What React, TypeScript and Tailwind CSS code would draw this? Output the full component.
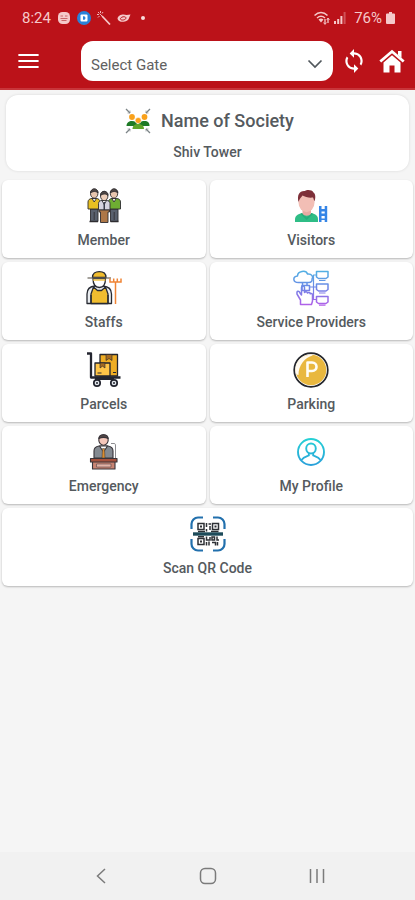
import { useState } from 'react';
import type { ReactNode } from 'react';
import { MdSync } from 'react-icons/md';

const gates = ['Select Gate', 'Main Gate', 'East Gate', 'West Gate'];

function SocietyIcon() {
  return (
    <svg viewBox="0 0 26 26" className="h-[26px] w-[26px]" aria-hidden="true">
      <g stroke="#7c8487" strokeWidth="1.3" fill="none">
        <path d="M1 1l4 4M25 1l-4 4M1 25l4-4M25 25l-4-4" />
        <path d="M2.5 5H5V2.5M23.5 5H21V2.5M2.5 21H5v2.5M23.5 21H21v2.5" strokeWidth="0.6" />
      </g>
      <circle cx="7" cy="9" r="2.9" fill="#f9a11b" />
      <circle cx="19.5" cy="9" r="2.9" fill="#f9a11b" />
      <path d="M1.5 18c0-3.5 2.5-5 5.5-5s5 1.5 6 5z" fill="#1d7a26" />
      <path d="M13 18c0-3.5 3-5 6.5-5s5 1.5 5 5z" fill="#1d7a26" />
      <path d="M7.5 21c0-3.5 2.5-5 5.7-5s5.8 1.5 5.8 5z" fill="#5fa52a" />
      <circle cx="13.2" cy="12.5" r="3" fill="#f9a11b" stroke="#fff" strokeWidth="0.5" />
    </svg>
  );
}

function MemberIcon() {
  return (
    <svg viewBox="0 0 36 36" className="h-9 w-9" aria-hidden="true">
      <g stroke="#2e2c30" strokeWidth="0.9" strokeLinejoin="round">
        <path d="M4.5 21H12v12.5H4.5zM24.5 21H32v12.5h-7.5z" fill="#59606d" />
        <path d="M2 21v-7c0-2 1.5-3.5 4-3.5h4.5c2 0 3.5 1.5 3.5 3.5v7z" fill="#e7bf22" />
        <path d="M22.5 21v-7c0-2 1.5-3.5 3.5-3.5h4.5c2.5 0 4 1.5 4 3.5v7z" fill="#6eae32" />
        <path d="M6 10.5l2.2 3.5 2.3-3.5zM25.8 10.5L28 14l2.3-3.5z" fill="#f2eee8" />
        <ellipse cx="8.2" cy="5.5" rx="3.7" ry="4.7" fill="#e8c6ae" />
        <ellipse cx="28" cy="5.5" rx="3.7" ry="4.7" fill="#e8c6ae" />
        <path d="M4.5 5C4 .2 12.5-.5 12 5c-2-2-5-2-7.5 0zM24.3 5c-.5-4.8 8-5.5 7.5 0-2-2-5-2-7.5 0z" fill="#514947" />
        <path d="M12.5 22v-6.5c0-2 1.5-3 3.5-3h4.5c2 0 3.5 1 3.5 3V22z" fill="#d5d4df" />
        <path d="M16 12.5l2.2 4 2.3-4z" fill="#fff" />
        <path d="M17.5 14H19v8h-1.5z" fill="#3b3e4a" stroke="none" />
        <ellipse cx="18.2" cy="8" rx="3.7" ry="4.7" fill="#edceb9" />
        <path d="M14.5 7.5c-.5-5.5 8-5.5 7.5 0-2-2-5-2-7.5 0z" fill="#514947" />
        <path d="M13 22h10.5v2H22v10.5h-7.5V24H13z" fill="#ad7747" />
      </g>
      <path d="M8.2 24v8M28.2 24v8" stroke="#2e2c30" strokeWidth="0.8" />
      <path d="M3.5 33.5H12M24.5 33.5h8" stroke="#2e2c30" strokeWidth="1.5" />
    </svg>
  );
}

function VisitorsIcon() {
  return (
    <svg viewBox="0 0 36 36" className="h-9 w-9" aria-hidden="true">
      <path d="M2 34v-2.5c0-4 3-5.5 7-6.5h9.500c4 1 6.500 2.500 6.500 6.500V34z" fill="#2fbd86" />
      <path d="M9 25l4.700 4.500L18.500 25l1.500 1-6.300 6L7.500 26z" fill="#27ad7c" />
      <path d="M9.500 20H18v5.500c-1.500 3-7 3-8.500 0z" fill="#e8aaa3" />
      <ellipse cx="13.5" cy="14.5" rx="8" ry="9.7" fill="#f2beb5" />
      <path d="M5.500 14C3.800 7 6.500 2.500 12 3c2-1.500 7-1.300 8.500 1.500 2.500 2 2 6 1 9L20 9.500c-4 .5-8-.5-10.500-2-1 1.500-3 3-4 6.500z" fill="#7e3039" />
      <g fill="#3585e6">
        <path d="M26 18h2.500v16H26zM31.700 18h2.500v16h-2.500z" />
        <path d="M26 21h8v2.500h-8zM26 25.500h8V28h-8zM26 30.500h8V32h-8z" />
      </g>
    </svg>
  );
}

function StaffsIcon() {
  return (
    <svg viewBox="0 0 36 36" className="h-9 w-9" aria-hidden="true">
      <g stroke="#272a32" strokeWidth="1.3" strokeLinejoin="round">
        <path d="M1 33.5V24c0-5 3-7.5 8-8h8c5 .5 8.500 3 8.500 8v9.500z" fill="#e9ecef" />
        <path d="M5 33.500V24l2.500-7 4 3.500h4l4-3.500 2.500 7v9.500z" fill="#f1bd2f" />
        <path d="M7 8.500c0 6 2.500 9 6.300 9s6.200-3 6.200-9z" fill="#fff" />
        <path d="M6.500 7.500c0-4 2.800-5.800 6.800-5.800s6.700 1.800 6.700 5.800z" fill="#f1bd2f" />
        <path d="M5 25v8.500M22 25v8.500" fill="none" />
      </g>
      <path d="M1.500 8H25" stroke="#69645a" strokeWidth="1.2" />
      <path d="M7 10h12.500" stroke="#f1bd2f" strokeWidth="1.3" />
      <path d="M24 8.500V12h11V8.500M27.700 8.500V12M31.300 8.500V12M29.500 12v22" fill="none" stroke="#f08435" strokeWidth="1.5" />
    </svg>
  );
}

function ServiceIcon() {
  return (
    <svg viewBox="0 0 36 36" className="h-9 w-9" aria-hidden="true">
      <defs>
        <linearGradient id="serviceStroke" x1="0" y1="0" x2="0" y2="36" gradientUnits="userSpaceOnUse">
          <stop offset="0" stopColor="#4fb2e3" />
          <stop offset="0.5" stopColor="#6e86e6" />
          <stop offset="1" stopColor="#b45ee9" />
        </linearGradient>
      </defs>
      <g fill="none" stroke="url(#serviceStroke)" strokeWidth="1.5" strokeLinejoin="round">
        <path d="M5.500 12.500C-.5 12.500-.5 6.500 4.500 6c0-5 8.500-6.500 10-2 4.500-.5 6 3 4.500 5 .5 2-1 3.500-3 3.500z" />
        <path d="M23.500 1.500H35V7l-2 1.500h-7.500l-2-1.500zM23.500 14H35v5.500L33 21h-7.500l-2-1.500zM23.500 26.500H35V32l-2 1.500h-7.500l-2-1.500z" />
        <path d="M26 10.500h6.500M26 23h6.500M26 35.200h6.500M23.500 5h-3v24.500h3M16 17h7.500" strokeWidth="1.2" />
        <path d="M9.500 12.500v3M14 12.500v3M9 15.500h7.500v5H9z" />
        <path d="M7.500 34.500V30L4 24c-.5-3.500 2-3.500 3-1l1.500 2v-7.500c0-2 3-2 3 0v5c1-1 2.500-1 3 .5 1-1 2.500-.5 2.800.7 1.200-.5 2.200 0 2.200 1.300v6l-1 3.500z" />
      </g>
    </svg>
  );
}

function ParcelsIcon() {
  return (
    <svg viewBox="0 0 36 36" className="h-9 w-9" aria-hidden="true">
      <g stroke="#23252f" strokeWidth="1.3" strokeLinejoin="round">
        <path d="M14 2.500h17.500V24H14z" fill="#efad24" />
        <path d="M20 2.500h6v6l-3-2-3 2z" fill="#a66b21" strokeWidth="0.6" />
        <path d="M9 11h15v13H9z" fill="#ffc548" />
        <path d="M14 11h5v5l-2.500-1.800L14 16z" fill="#a66b21" strokeWidth="0.6" />
      </g>
      <path d="M11.500 21h4M27 20.500h3" stroke="#23252f" strokeWidth="1" />
      <path d="M1 1.500h4v24h29.500" fill="none" stroke="#23252f" strokeWidth="2.3" strokeLinejoin="round" />
      <path d="M9 27h19" stroke="#23252f" strokeWidth="2" />
      <g fill="#e4e9ee" stroke="#23252f" strokeWidth="1.7">
        <circle cx="11" cy="31" r="3.2" />
        <circle cx="28" cy="31" r="3.2" />
      </g>
      <circle cx="11" cy="31" r="1" fill="#23252f" />
      <circle cx="28" cy="31" r="1" fill="#23252f" />
    </svg>
  );
}

function ParkingIcon() {
  return (
    <svg viewBox="0 0 36 36" className="h-9 w-9" aria-hidden="true">
      <circle cx="18" cy="18" r="16.8" fill="#fff" stroke="#24262c" strokeWidth="1.7" />
      <circle cx="18" cy="18" r="15.3" fill="#e9b83f" />
      <path d="M3.500 22.500C0 11 9 1 20 3.200 11.500 6 5.500 13 5.500 23z" fill="#fffaf0" />
      <path d="M14.500 25V10.500H19c6 0 6 8.500 0 8.500h-4.500" fill="none" stroke="#fffdf5" strokeWidth="2.6" strokeLinejoin="round" />
    </svg>
  );
}

function EmergencyIcon() {
  return (
    <svg viewBox="0 0 36 36" className="h-9 w-9" aria-hidden="true">
      <g stroke="#383439" strokeWidth="1.1" strokeLinejoin="round">
        <path d="M8 24v-7c0-3 2-4.500 5-5h9c3 .5 5 2 5 5v7z" fill="#848a91" />
        <path d="M13.500 12l4 6 4-6z" fill="#fff" />
        <ellipse cx="17.5" cy="6" rx="4.7" ry="5.2" fill="#f5c7ba" />
        <path d="M12.800 4.500c.5-5 8.900-5 9.400 0-3-1.500-6.400-1.500-9.400 0z" fill="#544848" />
        <path d="M16.500 14.500h2L19 24h-3z" fill="#db8c2d" strokeWidth="0.5" />
        <path d="M6.500 27.500H29V35H6.500z" fill="#c88473" />
        <path d="M4.500 24.500H31V28H4.500z" fill="#a6513c" />
        <path d="M10.500 30H25v3H10.500z" fill="#e4b3a6" strokeWidth="0.5" />
      </g>
      <path d="M25 9.500h3c1.500 0 1.500 1 1.500 2.500v12" fill="none" stroke="#8d8d91" strokeWidth="1" />
    </svg>
  );
}

function ProfileIcon() {
  return (
    <svg viewBox="0 0 36 36" className="h-9 w-9" aria-hidden="true">
      <defs>
        <linearGradient id="profileStroke" x1="0" y1="4" x2="0" y2="32" gradientUnits="userSpaceOnUse">
          <stop offset="0" stopColor="#25d2d5" />
          <stop offset="1" stopColor="#2a9fda" />
        </linearGradient>
      </defs>
      <g fill="none" stroke="url(#profileStroke)" strokeWidth="1.9">
        <circle cx="18" cy="18" r="13" />
        <ellipse cx="18" cy="14.5" rx="4.8" ry="5" />
        <path d="M15.800 19v2.500c-2 1-5 1.500-7.300 4.500M20.200 19v2.500c2 1 5 1.500 7.300 4.500" />
      </g>
    </svg>
  );
}

function QrIcon() {
  return (
    <svg viewBox="0 0 36 36" className="h-9 w-9" aria-hidden="true">
      <path
        d="M13 1.500H8A6.500 6.500 0 0 0 1.500 8v5M23 1.500h5A6.500 6.500 0 0 1 34.500 8v5M13 34.500H8A6.500 6.500 0 0 1 1.500 28v-5M23 34.500h5a6.500 6.500 0 0 0 6.500-6.500v-5"
        fill="none"
        stroke="#2270ad"
        strokeWidth="2.2"
      />
      <g fill="none" stroke="#2e3136" strokeWidth="1.5">
        <path d="M8 7.500h6v6H8zM22.500 7.500h6v6h-6zM8 22.500h6v6H8z" />
        <path d="M16.500 7v4M18.500 8h2.500M20 10v4M16.500 13v2.500M8 15.500h7M21 15.500h7.500" />
        <path d="M8 20.800h6M16.500 20.500V24H20v-3M16.500 26v3.500M19 25.500v4M22 21h2.500v3H22zM27 20.500V24h2M22 26.500h3.500v3M27.500 26v3.500" />
      </g>
      <path d="M10 9.500h2v2h-2zM24.500 9.500h2v2h-2zM10 24.500h2v2h-2z" fill="#2e3136" />
      <path d="M3 16.300h30v3.400H3z" fill="#1d4b5a" />
    </svg>
  );
}

const menu: { label: string; icon: ReactNode; wide?: boolean }[] = [
  { label: 'Member', icon: <MemberIcon /> },
  { label: 'Visitors', icon: <VisitorsIcon /> },
  { label: 'Staffs', icon: <StaffsIcon /> },
  { label: 'Service Providers', icon: <ServiceIcon /> },
  { label: 'Parcels', icon: <ParcelsIcon /> },
  { label: 'Parking', icon: <ParkingIcon /> },
  { label: 'Emergency', icon: <EmergencyIcon /> },
  { label: 'My Profile', icon: <ProfileIcon /> },
  { label: 'Scan QR Code', icon: <QrIcon />, wide: true },
];

function StatusBar() {
  return (
    <div className="flex h-[35px] items-center justify-between pr-5 pl-[22px] text-[#f5c9ca]">
      <div className="flex items-center gap-1.5">
        <span className="text-[15px] leading-5">8:24</span>
        <svg viewBox="0 0 14 14" className="h-3.5 w-3.5" aria-hidden="true">
          <rect x="1" y="1" width="12" height="12" rx="4.5" fill="currentColor" />
          <path d="M3.500 5H6M8 5h2.500M3.500 7.500h7M4.500 9.500h5" stroke="#c9666a" strokeWidth="1" />
        </svg>
        <svg viewBox="0 0 14 14" className="h-3.5 w-3.5" aria-hidden="true">
          <circle cx="7" cy="7" r="7" fill="#2a82d8" />
          <rect x="3.5" y="3.5" width="7" height="7" rx="1" fill="#fff" />
          <path d="M6 5.200h.8c2.200 0 2.200 3.600 0 3.600H6z" fill="#2a82d8" />
        </svg>
        <svg viewBox="0 0 14 14" className="h-3.5 w-3.5" aria-hidden="true">
          <path d="M5 5l8 8.500" stroke="currentColor" strokeWidth="1.7" />
          <path d="M3.500 0v2M0 3.500h2M1 1l1.500 1.500M6 1L5 2.500M1 6.500L2.500 5M3 3l2 2" stroke="currentColor" strokeWidth="0.9" />
        </svg>
        <svg viewBox="0 0 14 14" className="h-3.5 w-3.5" aria-hidden="true">
          <path d="M.5 7.500C1 4 6 2.500 9.500 4l4-.5L12 7c-.5 4.500-11 5.500-11.500.5z" fill="currentColor" />
          <path d="M3.500 7.800c0-2.300 5.500-2.800 5.500-.8s-5.500 3-5.500.8z" fill="none" stroke="#bb1219" strokeWidth="1" />
        </svg>
        <span className="ml-1 h-1 w-1 rounded-full bg-[#f8dcdc]" />
      </div>
      <div className="flex items-center gap-1">
        <svg viewBox="0 0 16 14" className="h-3.5 w-4" aria-hidden="true">
          <g fill="none" stroke="currentColor" strokeWidth="1.5">
            <path d="M.5 4.500c4-4 9-4 13 0M3 7c3-2.500 5-2.500 8 0" />
          </g>
          <path d="M4.500 8.500c2-1.500 3-1.500 5 0L7 11.500z" fill="currentColor" />
          <path d="M11 8v5M14 7v5" stroke="currentColor" strokeWidth="1.3" />
          <path d="M9.500 11.500l1.500 2 1.500-2M12.700 9L14 7l1.500 2" fill="none" stroke="currentColor" strokeWidth="0.8" />
        </svg>
        <svg viewBox="0 0 12 12" className="h-3 w-3" aria-hidden="true">
          <path d="M0 9h2v3H0zM3.200 7h2v5h-2zM6.400 4h2v8h-2z" fill="currentColor" />
          <path d="M9.600 0h2v12h-2z" fill="currentColor" opacity="0.35" />
        </svg>
        <span className="ml-1 text-[15px] leading-5">76%</span>
        <svg viewBox="0 0 9 12" className="h-3 w-[9px]" aria-hidden="true">
          <path d="M3 0h3v1.500h2A1 1 0 0 1 9 2.500V11a1 1 0 0 1-1 1H1a1 1 0 0 1-1-1V2.500a1 1 0 0 1 1-1h2z" fill="currentColor" />
        </svg>
      </div>
    </div>
  );
}

export default function App() {
  const [gate, setGate] = useState(gates[0]);

  return (
    <div className="flex min-h-screen flex-col bg-[#f5f5f5] font-['Roboto',sans-serif] text-[#555a5e]">
      <header className="border-b-2 border-[#c8353a] bg-[#bb1219]">
        <StatusBar />
        <div className="flex items-center pt-1.5 pr-2.5 pb-[7px] pl-[18px]">
          <button aria-label="Open menu" className="mr-[42px] shrink-0">
            <svg viewBox="0 0 21 16" className="h-4 w-[21px]" aria-hidden="true">
              <path d="M1.200 2h18.600M1.200 8h18.600M1.200 14h18.600" stroke="#fff" strokeWidth="2.2" strokeLinecap="round" />
            </svg>
          </button>
          <div className="relative min-w-0 flex-1">
            <select
              aria-label="Gate"
              value={gate}
              onChange={e => setGate(e.target.value)}
              className="h-10 w-full appearance-none rounded-xl bg-white pt-2 pr-9 pl-2.5 text-[15px] text-[#616161]"
            >
              {gates.map(g => (
                <option key={g}>{g}</option>
              ))}
            </select>
            <svg viewBox="0 0 16 10" className="pointer-events-none absolute top-[18px] right-2.5 h-2.5 w-4" aria-hidden="true">
              <path d="M1.500 1.500L8 8l6.500-6.500" fill="none" stroke="#50575c" strokeWidth="1.7" />
            </svg>
          </div>
          <button aria-label="Refresh" className="ml-2 shrink-0 text-white">
            <MdSync size={26} />
          </button>
          <button aria-label="Home" className="ml-3 shrink-0">
            <svg viewBox="0 0 26 24" className="h-6 w-[26px]" aria-hidden="true">
              <path d="M1.300 12.500L13 2.500l11.700 10" fill="none" stroke="#fff" strokeWidth="2.8" />
              <path d="M19 2h3.500v7L19 6z" fill="#fff" />
              <path d="M4.500 13.500L13 6.300l8.500 7.200v10h-6v-7h-5v7h-6z" fill="#fff" />
            </svg>
          </button>
        </div>
      </header>

      <main className="flex flex-col gap-[9px] pt-[5px]">
        <section className="mx-1.5 flex flex-col items-center gap-2 rounded-xl bg-white pt-[13px] pb-[9px] shadow-[0_0_3px_rgba(0,0,0,0.12)]">
          <div className="flex items-center gap-2.5 pl-1">
            <SocietyIcon />
            <h1 className="text-lg leading-6 font-medium">Name of Society</h1>
          </div>
          <p className="text-sm leading-5 font-medium">Shiv Tower</p>
        </section>

        <nav className="grid grid-cols-2 gap-1 px-0.5">
          {menu.map(item => (
            <button
              key={item.label}
              className={`flex flex-col items-center gap-1.5 rounded-md bg-white px-1 py-2 shadow-[0_1px_2px_rgba(0,0,0,0.25)] ${
                item.wide ? 'col-span-2' : ''
              }`}
            >
              {item.icon}
              <span className="text-sm leading-5 font-medium">{item.label}</span>
            </button>
          ))}
        </nav>
      </main>

      <footer className="mt-auto grid h-12 grid-cols-[1fr_auto_1fr] items-center bg-[#f1f1f1]">
        <button aria-label="Back" className="mr-[92px] justify-self-end">
          <svg viewBox="0 0 12 18" className="h-[18px] w-3" aria-hidden="true">
            <path d="M10 2L2.500 9l7.500 7" fill="none" stroke="#7b7b7b" strokeWidth="1.5" />
          </svg>
        </button>
        <button aria-label="Home screen">
          <svg viewBox="0 0 18 18" className="h-[18px] w-[18px]" aria-hidden="true">
            <rect x="1.5" y="1.5" width="15" height="15" rx="4.5" fill="none" stroke="#7b7b7b" strokeWidth="1.5" />
          </svg>
        </button>
        <button aria-label="Recent apps" className="ml-[92px] justify-self-start">
          <svg viewBox="0 0 16 16" className="h-4 w-4" aria-hidden="true">
            <path d="M1.500 1v14M8 1v14M14.500 1v14" fill="none" stroke="#7b7b7b" strokeWidth="1.5" />
          </svg>
        </button>
      </footer>
    </div>
  );
}
